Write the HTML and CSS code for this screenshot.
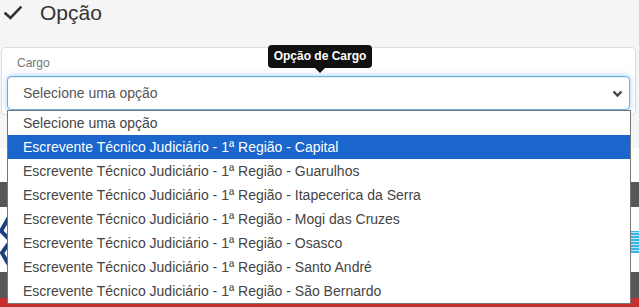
FILE: index.html
```html
<!DOCTYPE html>
<html lang="pt">
<head>
<meta charset="utf-8">
<title>Opção</title>
<link rel="stylesheet" href="styles.css">
</head>
<body>
<div class="header">
  <svg class="check" width="18" height="14" viewBox="0 0 18 14"><path d="M1.5 7.5 L6.5 12 L16.5 1.5" fill="none" stroke="#333" stroke-width="2.6" stroke-linecap="square"/></svg>
  <span class="title">Opção</span>
</div>
<div class="card">
  <label class="label">Cargo</label>
  <div class="field">
    <div class="select">
      <span>Selecione uma opção</span>
      <svg class="chev" width="11" height="8" viewBox="0 0 11 8"><path d="M1.5 1.5 L5.5 5.5 L9.5 1.5" fill="none" stroke="#444" stroke-width="2.4"/></svg>
    </div>
    <div class="tooltip">Opção de Cargo</div>
    <ul class="list">
      <li>Selecione uma opção</li>
      <li class="active">Escrevente Técnico Judiciário - 1ª Região - Capital</li>
      <li>Escrevente Técnico Judiciário - 1ª Região - Guarulhos</li>
      <li>Escrevente Técnico Judiciário - 1ª Região - Itapecerica da Serra</li>
      <li>Escrevente Técnico Judiciário - 1ª Região - Mogi das Cruzes</li>
      <li>Escrevente Técnico Judiciário - 1ª Região - Osasco</li>
      <li>Escrevente Técnico Judiciário - 1ª Região - Santo André</li>
      <li>Escrevente Técnico Judiciário - 1ª Região - São Bernardo</li>
    </ul>
  </div>
</div>
<div class="gap"></div>
<div class="strip-white"></div>
<div class="band"></div>
<div class="logo-row">
  <svg class="logo-left" width="10" height="60" viewBox="0 0 10 60"><path d="M9 8 L1 22 L9 30 M9 34 L2 44 L9 56" fill="none" stroke="#1b3f7a" stroke-width="4"/></svg>
  <div class="logo-right"></div>
</div>
<div class="band band2"></div>
<div class="red"></div>
</body>
</html>
```
FILE: styles.css
```css
* { box-sizing: border-box; }
html, body { margin: 0; padding: 0; }
body {
  background: #f5f5f5;
  font-family: "Liberation Sans", Arial, sans-serif;
  color: #333;
  width: 639px;
  height: 307px;
  overflow: hidden;
}
.header {
  height: 47px;
  display: flex;
  align-items: flex-start;
  padding: 0 0 0 4px;
}
.check { margin-top: 6px; }
.title {
  font-size: 21px;
  margin-left: 18px;
  line-height: 24px;
  margin-top: 1px;
  color: #333;
}
.card {
  margin: 0 3px 0 1px;
  height: 68px;
  background: #fff;
  border: 1px solid #ddd;
  border-radius: 4px;
  padding: 8px 5px 0 5px;
  position: relative;
  z-index: 2;
}
.label {
  display: block;
  font-size: 12px;
  color: #777;
  padding-left: 10px;
  line-height: 14px;
  height: 20px;
}
.field { position: relative; }
.select {
  height: 34px;
  border: 1px solid #66afe9;
  border-radius: 4px;
  box-shadow: inset 0 1px 1px rgba(0,0,0,.075), 0 0 6px rgba(102,175,233,.6);
  display: flex;
  align-items: center;
  justify-content: space-between;
  padding: 0 6px 0 15px;
  font-size: 14px;
  color: #555;
  background: #fff;
}
.chev { margin-top: 1px; }
.tooltip {
  position: absolute;
  left: 261px;
  top: -31px;
  width: 104px;
  height: 23px;
  background: #111;
  color: #fff;
  font-weight: bold;
  font-size: 12px;
  line-height: 23px;
  text-align: center;
  border-radius: 4px;
}
.tooltip::after {
  content: "";
  position: absolute;
  left: 47px;
  bottom: -5px;
  border-left: 5px solid transparent;
  border-right: 5px solid transparent;
  border-top: 5px solid #111;
}
.list {
  position: absolute;
  left: 0;
  top: 34px;
  width: 624px;
  margin: 0;
  padding: 0;
  list-style: none;
  background: #fff;
  border: 1px solid #767676;
  z-index: 5;
}
.list li {
  height: 24px;
  line-height: 24px;
  padding-left: 15px;
  font-size: 14px;
  color: #444;
  white-space: nowrap;
}
.list li.active {
  background: #1a66cc;
  color: #fff;
}
.gap { height: 33px; }
.strip-white { height: 34px; background: #fff; }
.band { height: 25px; background: #575757; }
.logo-row {
  height: 65px;
  background: #fff;
  display: flex;
  justify-content: space-between;
  align-items: center;
}
.logo-left { margin-top: -2px; }
.logo-right {
  width: 8px;
  height: 22px;
  background: repeating-linear-gradient(0deg, #35b4e8 0 2px, #bfe8f8 2px 3px);
  margin-top: 4px;
}
.band2 { height: 26px; }
.red { height: 20px; background: #c62f2f; }
```
